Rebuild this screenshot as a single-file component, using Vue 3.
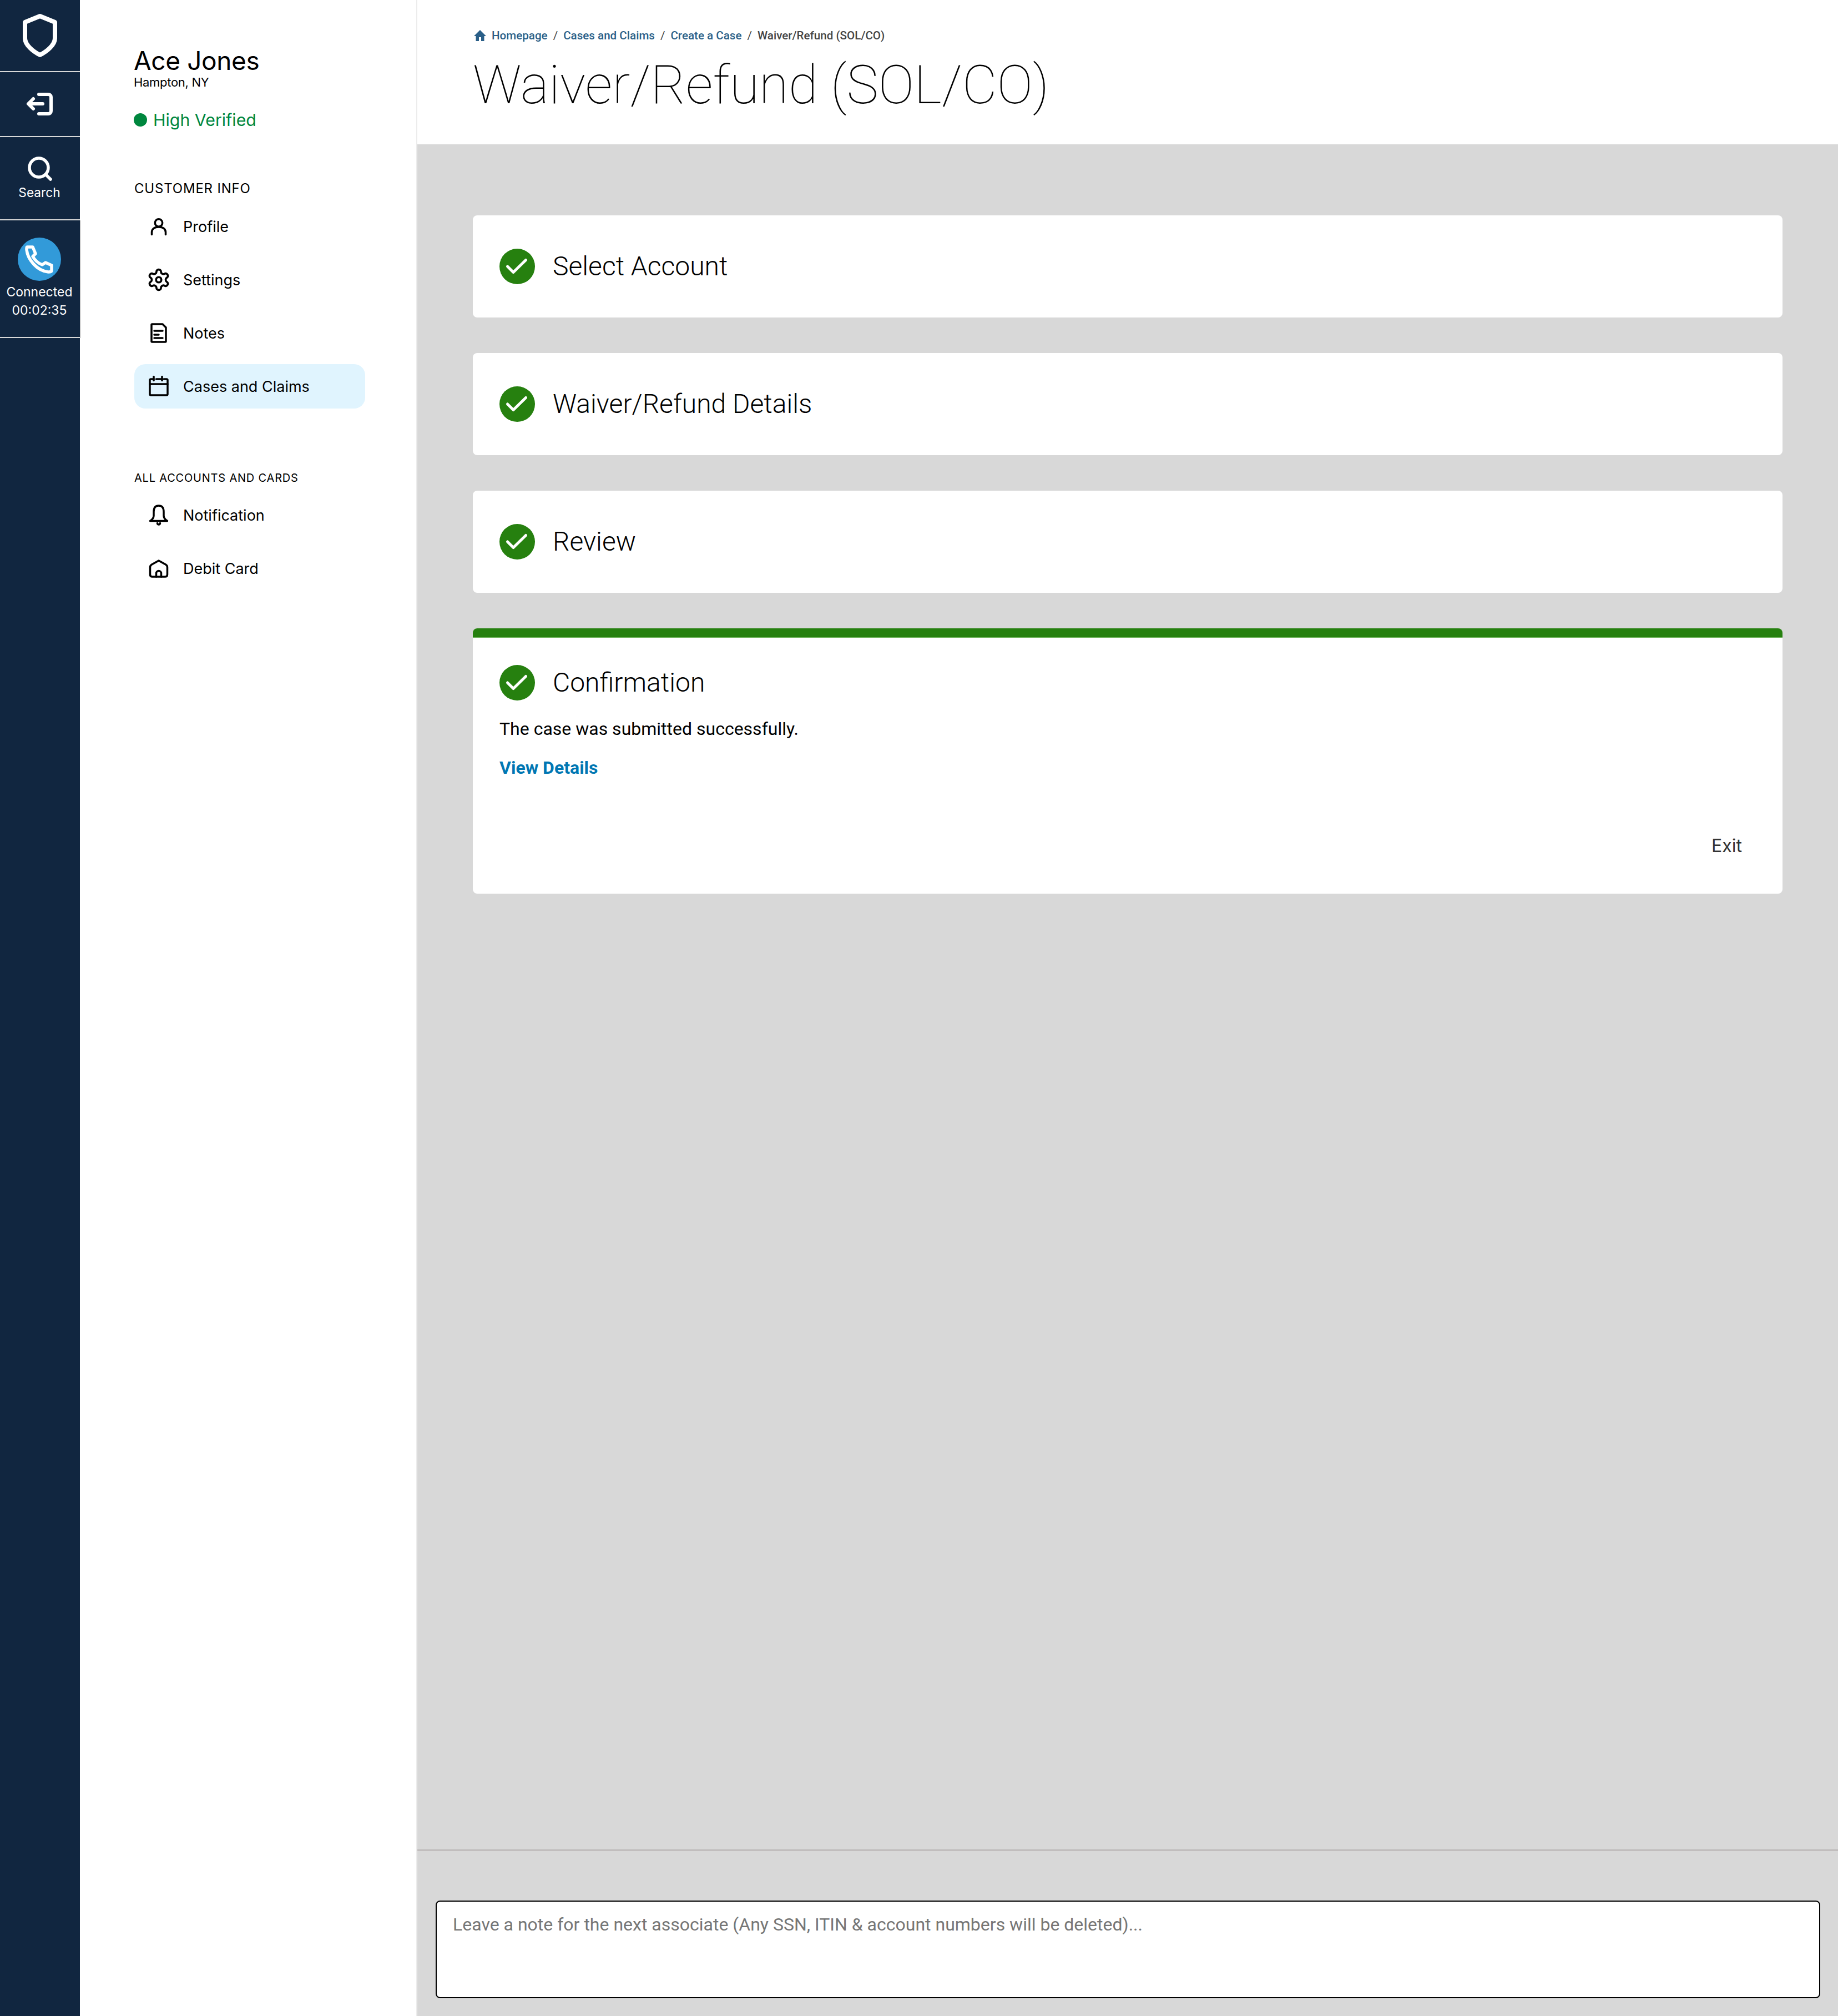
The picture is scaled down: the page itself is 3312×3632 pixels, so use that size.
<script setup>
const customer = [
  { label: 'Profile', icon: 'profile' },
  { label: 'Settings', icon: 'settings' },
  { label: 'Notes', icon: 'notes' },
  { label: 'Cases and Claims', icon: 'cases', active: true },
]
const accounts = [
  { label: 'Notification', icon: 'bell' },
  { label: 'Debit Card', icon: 'house' },
]
const steps = ['Select Account', 'Waiver/Refund Details', 'Review']
const crumbs = ['Homepage', 'Cases and Claims', 'Create a Case']
const paths = {
  profile: ['M7.500 34.500v-4c0-6 5-9.500 12.500-9.500s12.500 3.500 12.500 9.500v4', 'M20 6.800a6.700 6.700 0 1 0 0 13.400a6.700 6.700 0 1 0 0-13.400z'],
  notes: ['M8 4H27L33 10V35A1 1 0 0 1 32 36H8A1 1 0 0 1 7 35V5A1 1 0 0 1 8 4Z', 'M12 16h15', 'M12 23h8', 'M12 29h15'],
  cases: ['M11 7H6a2 2 0 0 0-2 2v25a2 2 0 0 0 2 2h28a2 2 0 0 0 2-2V9a2 2 0 0 0-2-2h-5', 'M4 16h32', 'M11 2.500v7', 'M26 2.500v7', 'M15.500 7h10.500'],
  bell: ['M20 3c-6 0-9 4-9 11v7c0 4-2.500 7-6.500 9.500h31c-4-2.500-6.500-5.500-6.500-9.500v-7c0-7-3-11-9-11z', 'M17.500 34.500a2.500 2.500 0 0 0 5 0'],
  house: ['M20 6L7.500 13c-2 1.200-3 3-3 5V31c0 2.500 1.500 4 4 4h23c2.500 0 4-1.500 4-4V18c0-2-1-3.800-3-5z', 'M15.500 35V29a4.500 4.500 0 0 1 9 0v6'],
}
</script>

<template>
  <div class="page">
    <nav class="rail">
      <div class="rail-cell cell-logo">
        <svg width="70" height="82" viewBox="0 0 70 82" fill="none" stroke="#fff" stroke-width="8" stroke-linejoin="round" stroke-linecap="round">
          <path d="M35 6L62 17V46C62 58 47 70 35 76C23 70 8 58 8 46V17Z" />
        </svg>
      </div>
      <div class="rail-cell cell-exit">
        <svg width="56" height="48" viewBox="0 0 56 48" fill="none" stroke="#fff" stroke-width="6" stroke-linejoin="round" stroke-linecap="round">
          <path d="M26 7H43C46 7 48 9 48 12V37C48 40 46 42 43 42H26" />
          <path d="M33 24H8M16 15L7 24L16 33" />
        </svg>
      </div>
      <div class="rail-cell cell-search">
        <svg width="52" height="52" viewBox="0 0 52 52" fill="none" stroke="#fff" stroke-width="5.500" stroke-linecap="round">
          <circle cx="24" cy="23" r="17" />
          <path d="M37 36L45 44" />
        </svg>
        <span>Search</span>
      </div>
      <div class="rail-cell cell-call">
        <span class="phone">
          <svg width="78" height="78" viewBox="0 0 78 78" fill="none" stroke="#fff" stroke-width="5.500" stroke-linejoin="round">
            <path d="M17 17H27L32 29L27 34C31 41 36 46 44 49L50 45L61 50V60C61 61 59 62 55 62C35 60 18 40 16 22C16 19 16 17 17 17Z" />
          </svg>
        </span>
        <span class="call-text">Connected</span>
        <span class="call-text">00:02:35</span>
      </div>
    </nav>

    <aside class="side">
      <h2 class="name">Ace Jones</h2>
      <p class="place">Hampton, NY</p>
      <div class="verified"><i class="dot"></i>High Verified</div>

      <h3 class="group group-one">CUSTOMER INFO</h3>
      <ul class="menu">
        <li v-for="item in customer" :key="item.label" class="menu-item" :class="{ active: item.active }">
          <svg v-if="item.icon === 'settings'" class="icon icon-gear" width="44" height="44" viewBox="0 0 24 24" fill="none" stroke="#000" stroke-width="2" stroke-linejoin="round">
            <path d="M12.220 2h-.44a2 2 0 0 0-2 2v.18a2 2 0 0 1-1 1.730l-.43.25a2 2 0 0 1-2 0l-.15-.08a2 2 0 0 0-2.730.73l-.22.38a2 2 0 0 0 .73 2.730l.15.1a2 2 0 0 1 1 1.720v.51a2 2 0 0 1-1 1.740l-.15.09a2 2 0 0 0-.73 2.730l.22.38a2 2 0 0 0 2.730.73l.15-.08a2 2 0 0 1 2 0l.43.25a2 2 0 0 1 1 1.730V20a2 2 0 0 0 2 2h.44a2 2 0 0 0 2-2v-.18a2 2 0 0 1 1-1.730l.43-.25a2 2 0 0 1 2 0l.15.08a2 2 0 0 0 2.730-.73l.22-.39a2 2 0 0 0-.73-2.730l-.15-.08a2 2 0 0 1-1-1.740v-.5a2 2 0 0 1 1-1.740l.15-.09a2 2 0 0 0 .73-2.730l-.22-.38a2 2 0 0 0-2.730-.73l-.15.08a2 2 0 0 1-2 0l-.43-.25a2 2 0 0 1-1-1.730V4a2 2 0 0 0-2-2z" />
            <circle cx="12" cy="12" r="2.600" />
          </svg>
          <svg v-else class="icon" width="40" height="40" viewBox="0 0 40 40" fill="none" stroke="#000" stroke-width="3.500" stroke-linejoin="round" stroke-linecap="round">
            <path v-for="d in paths[item.icon]" :key="d" :d="d" />
          </svg>
          <span>{{ item.label }}</span>
        </li>
      </ul>

      <h3 class="group group-two">ALL ACCOUNTS AND CARDS</h3>
      <ul class="menu">
        <li v-for="item in accounts" :key="item.label" class="menu-item">
          <svg class="icon" width="40" height="40" viewBox="0 0 40 40" fill="none" stroke="#000" stroke-width="3.500" stroke-linejoin="round" stroke-linecap="round">
            <path v-for="d in paths[item.icon]" :key="d" :d="d" />
          </svg>
          <span>{{ item.label }}</span>
        </li>
      </ul>
    </aside>

    <main class="main">
      <header class="top">
        <div class="crumbs">
          <svg class="home" width="24" height="24" viewBox="0 0 24 24" fill="#2a5f88"><path d="M12 2L1 13H4.500V22H10V15H14V22H19.500V13H23Z" /></svg>
          <template v-for="c in crumbs" :key="c">
            <a class="crumb">{{ c }}</a><span class="sep">/</span>
          </template>
          <span class="current">Waiver/Refund (SOL/CO)</span>
        </div>
        <h1 class="title">Waiver/Refund (SOL/CO)</h1>
      </header>

      <section class="content">
        <div v-for="s in steps" :key="s" class="card step">
          <svg class="check" width="64" height="64" viewBox="0 0 64 64">
            <circle cx="32" cy="32" r="32" fill="#26800f" />
            <path d="M14.500 32L25 42.500L47.500 20.500" fill="none" stroke="#fff" stroke-width="5" stroke-linecap="round" stroke-linejoin="round" />
          </svg>
          <span class="step-title">{{ s }}</span>
        </div>

        <div class="card confirm">
          <div class="bar"></div>
          <div class="confirm-body">
            <div class="confirm-head">
              <svg class="check" width="64" height="64" viewBox="0 0 64 64">
                <circle cx="32" cy="32" r="32" fill="#26800f" />
                <path d="M14.500 32L25 42.500L47.500 20.500" fill="none" stroke="#fff" stroke-width="5" stroke-linecap="round" stroke-linejoin="round" />
              </svg>
              <span class="step-title">Confirmation</span>
            </div>
            <p class="msg">The case was submitted successfully.</p>
            <a class="details">View Details</a>
            <div class="exit-row"><span class="exit">Exit</span></div>
          </div>
        </div>
      </section>

      <footer class="foot">
        <div class="note">Leave a note for the next associate (Any SSN, ITIN &amp; account numbers will be deleted)...</div>
      </footer>
    </main>
  </div>
</template>

<style>
html, body { margin: 0; padding: 0; background: #fff; }
</style>

<style scoped>
* { box-sizing: border-box; }
.page {
  display: flex;
  width: 3312px;
  height: 3632px;
  overflow: hidden;
  font-family: Inter, "Liberation Sans", sans-serif;
  color: #000;
}
.rail {
  flex: 0 0 144px;
  min-width: 0;
  width: 144px;
  background: #112640;
  color: #fff;
  display: flex;
  flex-direction: column;
  position: relative;
  z-index: 1;
}
.rail-cell {
  display: flex;
  flex-direction: column;
  align-items: center;
  border-bottom: 2px solid #d8d8d8;
}
.cell-logo { height: 130px; padding-top: 23px; }
.cell-exit { height: 117px; padding-top: 33px; }
.cell-search { height: 150px; padding-top: 32px; font-size: 22.7px; }
.cell-search span { line-height: 32px; margin-left: -2px; }
.cell-call {
  width: 146px;
  height: 212px;
  padding: 31px 2px 0 0;
  background: #112640;
  border-right: 2px solid #d8d8d8;
  font-size: 23px;
}
.phone {
  width: 78px;
  height: 78px;
  border-radius: 50%;
  background: #329ad9;
  margin-bottom: 4px;
  display: block;
}
.phone svg { display: block; }
.call-text { line-height: 33px; }

.side {
  flex: 0 0 608px;
  background: #fff;
  border-right: 2px solid #ececec;
  padding: 0 0 0 98px;
}
.name {
  margin: 82px 0 0 -1px;
  font-size: 46px;
  font-weight: 400;
  line-height: 54px;
  letter-spacing: -.4px;
}
.place { margin: 1px 0 0 -1px; font-size: 22px; line-height: 22px; letter-spacing: -.3px; }
.verified {
  display: flex;
  align-items: center;
  margin: 37px 0 0 -1px;
  height: 40px;
  font-size: 30.3px;
  line-height: 40px;
  color: #00873e;
}
.dot {
  width: 24px;
  height: 24px;
  border-radius: 50%;
  background: #00873e;
  margin-right: 11px;
}
.group { margin: 0; font-weight: 400; }
.group-one { margin-top: 88px; font-size: 24px; line-height: 32px; letter-spacing: .8px; }
.group-two { margin-top: 110px; font-size: 20px; line-height: 30px; letter-spacing: .8px; }
.menu { list-style: none; margin: 0; padding: 0; width: 416px; display: flex; flex-direction: column; gap: 16px; }
.group-one + .menu { margin-top: 12px; }
.group-two + .menu { margin-top: 12px; }
.menu-item {
  display: flex;
  align-items: center;
  height: 80px;
  padding-left: 24px;
  font-size: 27px;
  border-radius: 20px;
}
.menu-item.active { background: #e0f4fe; }
.icon { flex: none; margin-right: 24px; }
.icon-gear { margin-left: -2px; margin-right: 22px; }

.main { flex: 1; display: flex; flex-direction: column; min-width: 0; background: #d8d8d8; font-family: Roboto, "Liberation Sans", sans-serif; }
.top { height: 260px; background: #fff; padding: 51px 0 0 101px; }
.crumbs { display: flex; align-items: center; height: 26px; font-size: 20.6px; font-weight: 500; }
.home { margin-right: 9px; }
.crumb { color: #2a5f88; }
.sep { color: #444; margin: 0 10px; font-weight: 400; }
.current { color: #444; }
.title {
  margin: 20px 0 0 -1px;
  font-size: 96.7px;
  font-weight: 100;
  line-height: 112px;
  color: #000;
}
.content { flex: 1; padding: 128px 100px 0; display: flex; flex-direction: column; gap: 64px; }
.card { background: #fff; border-radius: 8px; overflow: hidden; }
.step { height: 184px; display: flex; align-items: center; padding-left: 48px; }
.check { flex: none; margin-right: 32px; }
.step-title { font-size: 48px; font-weight: 300; line-height: 64px; }
.confirm { height: 478px; }
.bar { height: 17px; background: #26800f; border-bottom: 1px solid #6db25a; }
.confirm-body { padding: 49px 73px 0 48px; }
.confirm-head { display: flex; align-items: center; }
.msg { margin: 31px 0 0; font-size: 32px; line-height: 40px; }
.details { display: block; margin-top: 30px; font-size: 32px; line-height: 40px; font-weight: 700; color: #0077b3; }
.exit-row { display: flex; justify-content: flex-end; margin-top: 101px; }
.exit { font-family: Inter, "Liberation Sans", sans-serif; font-size: 32px; line-height: 40px; color: #333; }
.foot { height: 300px; border-top: 2px solid #b5b0b0; padding: 90px 32px 0 33px; }
.note {
  height: 176px;
  background: #fff;
  border: 2px solid #000;
  border-radius: 8px;
  padding: 21px 29px;
  font-size: 32px;
  line-height: 40px;
  color: #767676;
}
</style>
